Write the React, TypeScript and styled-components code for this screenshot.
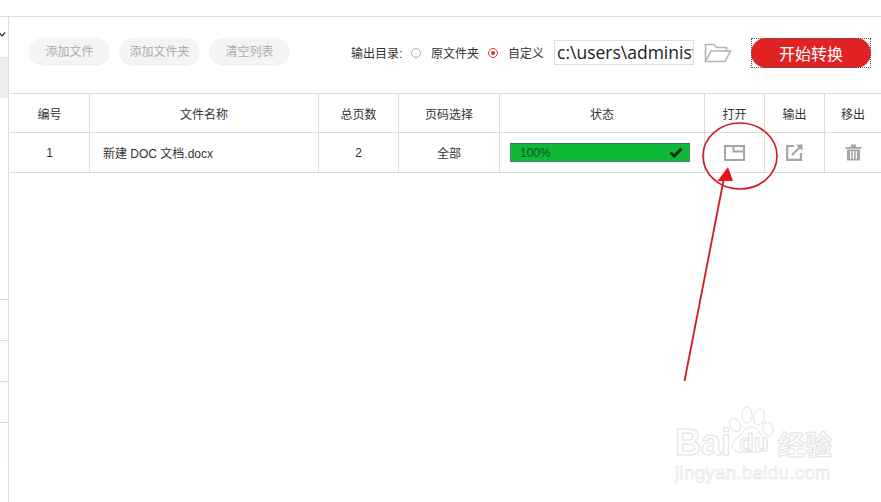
import React from 'react';
import styled, { createGlobalStyle } from 'styled-components';

const GlobalStyle = createGlobalStyle`
  html, body {
    margin: 0;
    padding: 0;
    background: #fff;
    font-family: "Liberation Sans", "Noto Sans CJK SC", sans-serif;
  }
`;

const LINE = '#dcdcdc';
const COLUMNS = '80px 229px 80px 101px 205px 60px 60px 56px';

const Page = styled.div`
  position: relative;
  width: 881px;
  height: 502px;
  overflow: hidden;
  background: #fff;
`;

const TopBar = styled.div`
  height: 16px;
  border-bottom: 1px solid ${LINE};
`;

const Body = styled.div`
  display: flex;
  height: 485px;
`;

const Sidebar = styled.div`
  width: 8px;
  border-right: 1px solid ${LINE};
  padding-top: 40px;
  display: flex;
  flex-direction: column;
  position: relative;
`;

const SideCaret = styled.svg`
  position: absolute;
  left: 0;
  top: 15px;
`;

const SideActive = styled.div`
  height: 40px;
  background: #eeeeee;
  border-top: 1px solid #e4e4e4;
`;

const SideSpacer = styled.div`
  height: 201px;
`;

const SideRow = styled.div`
  height: 40px;
  border-top: 1px solid ${LINE};
  background: #fdfdfd;
`;

const Content = styled.div`
  flex: 1;
  padding-left: 1px;
`;

const Toolbar = styled.div`
  height: 76px;
  display: flex;
  align-items: center;
  padding-left: 20px;
`;

const GhostButton = styled.div`
  width: 79px;
  height: 26px;
  margin-right: 11px;
  margin-top: -8px;
  padding-bottom: 2px;
  box-sizing: border-box;
  border-radius: 13px;
  background: #f4f4f4;
  box-shadow: 0 1px 2px rgba(0, 0, 0, 0.1);
  display: flex;
  align-items: center;
  justify-content: center;
  color: #adadad;
  font-size: 12px;
`;

const OutputGroup = styled.div`
  display: flex;
  align-items: center;
  margin-left: 51px;
  margin-top: -5px;
  font-size: 12px;
  color: #333;
`;

const OutputLabel = styled.span`
  width: 60px;
`;

const Radio = styled.span<{ $on?: boolean }>`
  width: 10px;
  height: 10px;
  border-radius: 50%;
  box-sizing: border-box;
  border: 1px solid ${(p) => (p.$on ? '#c9413f' : '#aaa')};
  display: flex;
  align-items: center;
  justify-content: center;
  margin-right: 10px;

  &::after {
    content: '';
    display: ${(p) => (p.$on ? 'block' : 'none')};
    width: 4px;
    height: 4px;
    border-radius: 50%;
    background: #c9413f;
  }
`;

const RadioText = styled.span<{ $w: number }>`
  width: ${(p) => p.$w}px;
`;

const PathBox = styled.div`
  width: 140px;
  height: 25px;
  box-sizing: border-box;
  border: 1px solid #dedede;
  padding-left: 2px;
  font-family: "Open Sans", sans-serif;
  font-size: 17.5px;
  line-height: 23px;
  color: #222;
  overflow: hidden;
  white-space: nowrap;
`;

const FolderBtn = styled.svg`
  margin-left: 10px;
  margin-right: 19px;
`;

const StartButton = styled.div`
  position: relative;
  width: 120px;
  height: 30px;
  box-sizing: border-box;
  border-radius: 15px;
  background: #e02322;
  color: #fff;
  font-size: 16px;
  display: flex;
  align-items: center;
  justify-content: center;

  &::after {
    content: '';
    position: absolute;
    inset: 0;
    border: 1px dotted #555;
  }
`;

const Row = styled.div<{ $h: number }>`
  display: grid;
  grid-template-columns: ${COLUMNS};
  height: ${(p) => p.$h}px;
  border-top: 1px solid ${LINE};
`;

const Cell = styled.div<{ $left?: boolean }>`
  display: flex;
  align-items: center;
  justify-content: ${(p) => (p.$left ? 'flex-start' : 'center')};
  padding-left: ${(p) => (p.$left ? '13px' : '0')};
  border-right: 1px solid ${LINE};
  font-size: 12px;
  color: #333;

  &:last-child {
    border-right: none;
  }
`;

const TableEnd = styled.div`
  border-top: 1px solid ${LINE};
`;

const Progress = styled.div`
  width: 180px;
  height: 19px;
  margin-right: 4px;
  box-sizing: border-box;
  background: #0dba37;
  border: 1px solid #4d8f5f;
  border-top-color: #3b6e49;
  display: flex;
  align-items: center;
  justify-content: space-between;
  padding: 0 6px 0 9px;
  font-size: 12px;
  color: #1c4a26;
`;

const Annotation = styled.svg`
  position: absolute;
  left: 0;
  top: 0;
  pointer-events: none;
`;

const Watermark = styled.div`
  position: absolute;
  left: 675px;
  top: 420px;
  color: #fff;
  -webkit-text-stroke: 1px #e2e2e2;
  pointer-events: none;
`;

const MarkLine = styled.div`
  position: relative;
  display: flex;
  align-items: center;
  height: 46px;
`;

const MarkBig = styled.span`
  font-family: "Liberation Sans", sans-serif;
  font-size: 36px;
  font-weight: 700;
`;

const MarkDu = styled.span`
  font-family: "Liberation Sans", sans-serif;
  font-size: 24px;
  font-weight: 700;
  margin-left: 8px;
  width: 39px;
`;

const MarkCn = styled.span`
  font-size: 27px;
  font-weight: 700;
`;

const MarkUrl = styled.div`
  position: relative;
  margin-top: -3px;
  font-family: "Liberation Sans", sans-serif;
  font-size: 18.5px;
  letter-spacing: 0.4px;
  -webkit-text-stroke: 0.7px #e4e4e4;
  line-height: 20px;
`;

const PawPrint = styled.svg`
  position: absolute;
  left: 52px;
  top: -15px;
`;

const headers = ['编号', '文件名称', '总页数', '页码选择', '状态', '打开', '输出', '移出'];

const App: React.FC = () => {
  return (
    <Page>
      <GlobalStyle />
      <TopBar />
      <Body>
        <Sidebar>
          <SideCaret width="6" height="6" viewBox="0 0 6 6">
            <path d="M0 1.5 L2 4 L5 0.5" fill="none" stroke="#333" strokeWidth="1.3" />
          </SideCaret>
          <SideActive />
          <SideSpacer />
          <SideRow />
          <SideRow />
          <SideRow />
          <SideRow />
        </Sidebar>
        <Content>
          <Toolbar>
            <GhostButton>添加文件</GhostButton>
            <GhostButton>添加文件夹</GhostButton>
            <GhostButton>清空列表</GhostButton>
            <OutputGroup>
              <OutputLabel>输出目录:</OutputLabel>
              <Radio />
              <RadioText $w={57}>原文件夹</RadioText>
              <Radio $on />
              <RadioText $w={46}>自定义</RadioText>
              <PathBox>c:\users\administ</PathBox>
              <FolderBtn width="28" height="20" viewBox="0 0 28 20">
                <path
                  d="M1.5 18.5 V1.5 H10 L12.5 4.500 H22.5 V8 M1.5 18.5 L7 8 H26.5 L21 18.5 Z"
                  fill="none"
                  stroke="#b4b4b4"
                  strokeWidth="1.6"
                />
              </FolderBtn>
              <StartButton>开始转换</StartButton>
            </OutputGroup>
          </Toolbar>
          <Row $h={38}>
            {headers.map((h) => (
              <Cell key={h}>{h}</Cell>
            ))}
          </Row>
          <Row $h={39}>
            <Cell>1</Cell>
            <Cell $left>新建 DOC 文档.docx</Cell>
            <Cell>2</Cell>
            <Cell>全部</Cell>
            <Cell>
              <Progress>
                <span>100%</span>
                <svg width="14" height="11" viewBox="0 0 14 11">
                  <path d="M1.5 5.5 L5.2 9 L12.5 1.8" fill="none" stroke="#0c2c14" strokeWidth="3" />
                </svg>
              </Progress>
            </Cell>
            <Cell>
              <svg width="21" height="16" viewBox="0 0 21 16">
                <path
                  d="M1 1 H20 V15 H1 Z M9.500 1 V6.500 H20"
                  fill="none"
                  stroke="#a6a6a6"
                  strokeWidth="2"
                />
              </svg>
            </Cell>
            <Cell>
              <svg width="17" height="17" viewBox="0 0 17 17">
                <path d="M8 2 H1.2 V15.8 H15 V9" fill="none" stroke="#a6a6a6" strokeWidth="2.2" />
                <path d="M6 11 L14 3" stroke="#a6a6a6" strokeWidth="2.2" />
                <path d="M10 0.5 H16.5 V7 Z" fill="#a6a6a6" />
              </svg>
            </Cell>
            <Cell>
              <svg width="17" height="17" viewBox="0 0 17 17">
                <path d="M0.5 3 H16.5 V4.8 H0.5 Z M6 0.5 H11 V3 H6 Z" fill="#a6a6a6" />
                <path d="M2 5.5 H15 V16.5 H2 Z" fill="#a6a6a6" />
                <path d="M5.7 7 V15 M8.5 7 V15 M11.3 7 V15" stroke="#fff" strokeWidth="1.2" />
              </svg>
            </Cell>
          </Row>
          <TableEnd />
        </Content>
      </Body>
      <Annotation width="881" height="502" viewBox="0 0 881 502">
        <ellipse cx="740" cy="156" rx="37" ry="33" fill="none" stroke="#cf1a1f" strokeWidth="1.6" />
        <path d="M684.5 381 L724 178" stroke="#d01a1f" strokeWidth="1.8" fill="none" />
        <path d="M728 167 L717.500 181 L733 181 Z" fill="#e5141c" />
      </Annotation>
      <Watermark>
        <PawPrint width="50" height="50" viewBox="0 0 50 50">
          <g fill="#fff" stroke="#e2e2e2" strokeWidth="1">
            <ellipse cx="8" cy="20" rx="5" ry="7" transform="rotate(-30 8 20)" />
            <ellipse cx="20" cy="10" rx="5" ry="8" />
            <ellipse cx="32" cy="12" rx="5.500" ry="8" transform="rotate(10 32 12)" />
            <ellipse cx="41" cy="24" rx="5" ry="7" transform="rotate(-15 41 24)" />
            <path d="M24 22 C32 22 32 30 38 33 C44 38 40 48 32 47 L14 47 C4 48 2 38 10 33 C16 30 16 22 24 22 Z" />
          </g>
        </PawPrint>
        <MarkLine>
          <MarkBig>Bai</MarkBig>
          <MarkDu>du</MarkDu>
          <MarkCn>经验</MarkCn>
        </MarkLine>
        <MarkUrl>jingyan.baidu.com</MarkUrl>
      </Watermark>
    </Page>
  );
};

export default App;
